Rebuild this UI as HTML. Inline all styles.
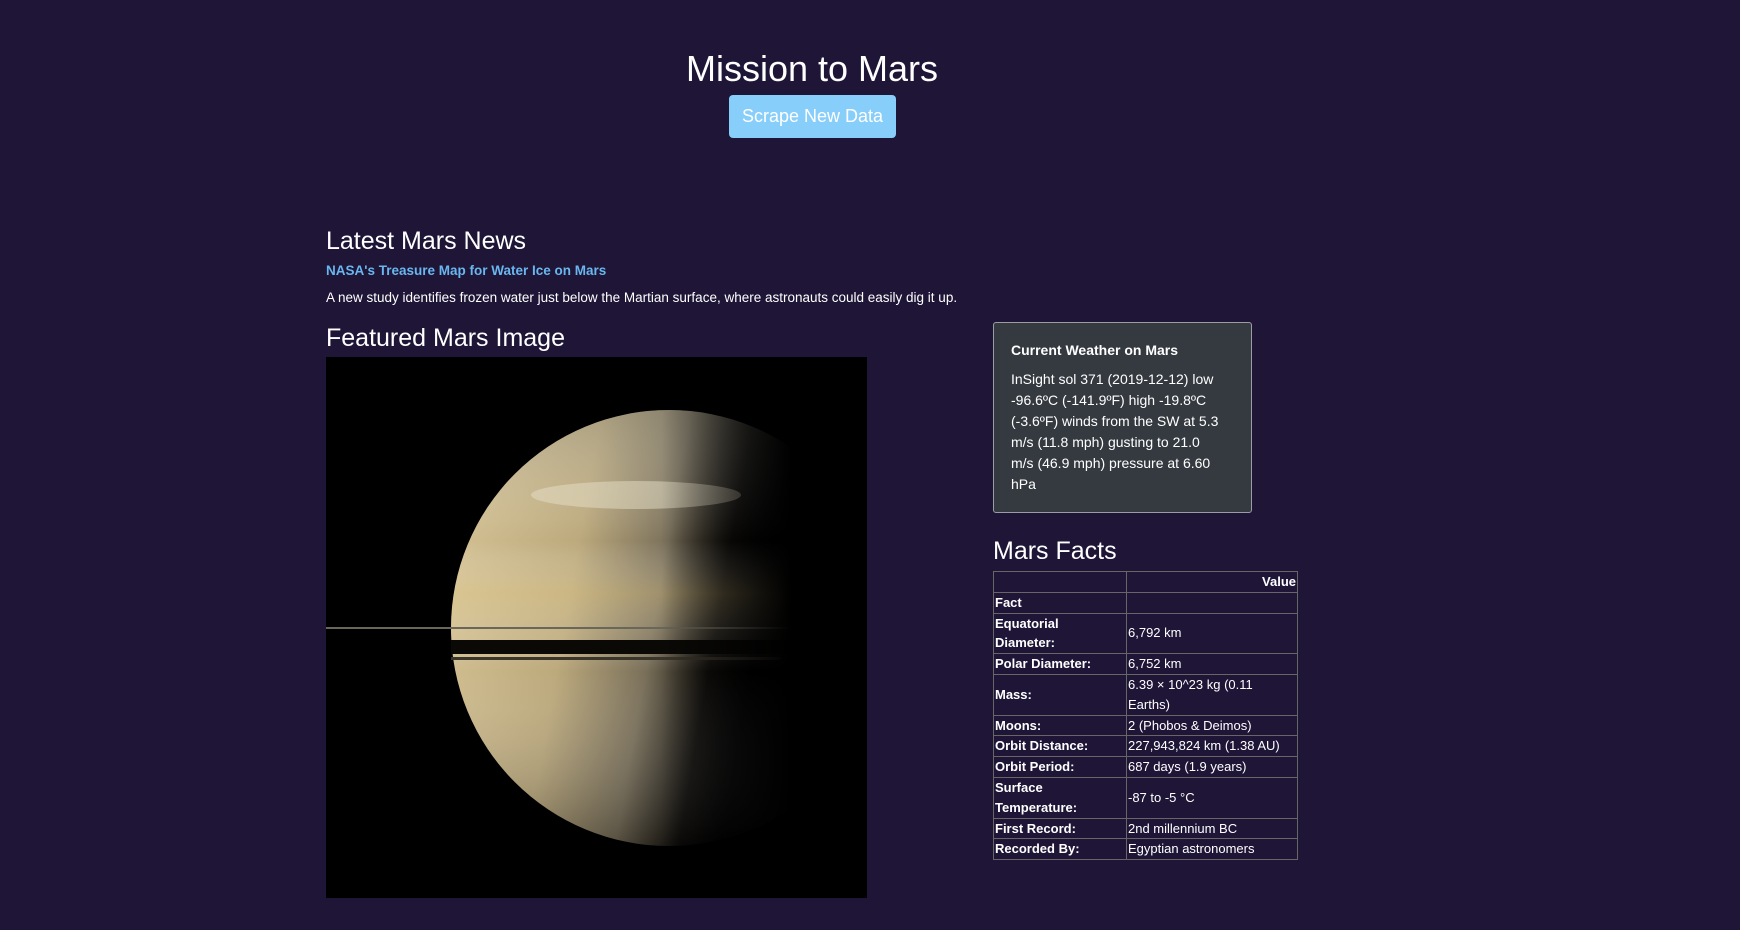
<!DOCTYPE html>
<html><head><meta charset="utf-8"><style>
*{box-sizing:border-box;margin:0;padding:0}
html,body{width:1740px;height:933px;overflow:hidden;background:#fff}
.bg{position:absolute;left:0;top:0;width:1740px;height:930px;background:#1e1537;color:#fff;font-family:"Liberation Sans",sans-serif}
.abs{position:absolute}
h1{position:absolute;left:0;width:1624px;text-align:center;top:48px;font-size:36px;font-weight:500}
.btn{left:729px;top:95px;width:167px;height:43px;background:#87cefa;border-radius:4px;font-size:18px;text-align:center;line-height:43px;color:#fff}
h2{position:absolute;font-size:25px;font-weight:500}
.link{color:#6ab6ef;font-weight:bold;font-size:13.5px}
.p{font-size:13.5px}
.card{left:993px;top:322px;width:259px;height:191px;background:#343a40;border:1px solid #9a9ea4;border-radius:3px;padding:17px 10px 17px 17px;font-size:14px;line-height:21px;white-space:nowrap}
table{position:absolute;left:993px;top:571px;width:305px;border-collapse:collapse;font-size:13px;line-height:19.8px;table-layout:fixed}
td,th{border:1px solid #666;padding:0 1px;vertical-align:middle;text-align:left}
th{font-weight:bold}
col.a{width:133px}
td:first-child{font-weight:bold}
</style></head><body><div class="bg">
<h1>Mission to Mars</h1>
<div class="abs btn">Scrape New Data</div>
<h2 style="left:326px;top:227px">Latest Mars News</h2>
<div class="abs link" style="left:326px;top:263px">NASA's Treasure Map for Water Ice on Mars</div>
<div class="abs p" style="left:326px;top:290px">A new study identifies frozen water just below the Martian surface, where astronauts could easily dig it up.</div>
<h2 style="left:326px;top:324px">Featured Mars Image</h2>
<svg class="abs" style="left:326px;top:357px" width="541" height="541" viewBox="0 0 541 541">
<defs>
<linearGradient id="pl" x1="125" y1="0" x2="470" y2="60" gradientUnits="userSpaceOnUse">
<stop offset="0" stop-color="#d8c698"/><stop offset="0.45" stop-color="#bca97c"/><stop offset="0.7" stop-color="#7a705a"/><stop offset="0.88" stop-color="#100e0b"/><stop offset="1" stop-color="#000"/></linearGradient>
<linearGradient id="bands" x1="0" y1="0" x2="0" y2="1">
<stop offset="0" stop-color="#8a8a80" stop-opacity=".4"/><stop offset=".3" stop-color="#fff" stop-opacity="0"/><stop offset=".42" stop-color="#e8d090" stop-opacity=".35"/><stop offset=".6" stop-color="#fff" stop-opacity="0"/><stop offset="1" stop-color="#000" stop-opacity=".3"/></linearGradient>
<linearGradient id="fade" x1="0" y1="0" x2="1" y2="0"><stop offset="0" stop-color="#000" stop-opacity="0"/><stop offset=".62" stop-color="#000" stop-opacity="0"/><stop offset=".86" stop-color="#000" stop-opacity="1"/></linearGradient>
</defs>
<rect width="541" height="541" fill="#000"/>
<circle cx="343" cy="271" r="218" fill="url(#pl)"/>
<circle cx="343" cy="271" r="218" fill="url(#bands)"/>
<ellipse cx="310" cy="138" rx="105" ry="14" fill="#e6e0c8" opacity=".5"/>
<rect x="0" y="270" width="541" height="2" fill="#6a675a"/>
<rect x="125" y="283" width="340" height="14" fill="#0a0906"/>
<rect x="125" y="300" width="330" height="3" fill="#3a352a"/>
<rect x="0" y="0" width="541" height="541" fill="url(#fade)"/>
</svg>
<div class="abs card"><div style="font-weight:bold;margin-bottom:8px">Current Weather on Mars</div>InSight sol 371 (2019-12-12) low<br>-96.6ºC (-141.9ºF) high -19.8ºC<br>(-3.6ºF) winds from the SW at 5.3<br>m/s (11.8 mph) gusting to 21.0<br>m/s (46.9 mph) pressure at 6.60<br>hPa</div>
<h2 style="left:993px;top:537px">Mars Facts</h2>
<table>
<colgroup><col class="a"><col></colgroup>
<tr><th></th><th style="text-align:right">Value</th></tr>
<tr><td>Fact</td><td></td></tr>
<tr><td>Equatorial<br>Diameter:</td><td>6,792 km</td></tr>
<tr><td>Polar Diameter:</td><td>6,752 km</td></tr>
<tr><td>Mass:</td><td>6.39 × 10^23 kg (0.11 Earths)</td></tr>
<tr><td>Moons:</td><td>2 (Phobos &amp; Deimos)</td></tr>
<tr><td>Orbit Distance:</td><td>227,943,824 km (1.38 AU)</td></tr>
<tr><td>Orbit Period:</td><td>687 days (1.9 years)</td></tr>
<tr><td>Surface<br>Temperature:</td><td>-87 to -5 °C</td></tr>
<tr><td>First Record:</td><td>2nd millennium BC</td></tr>
<tr><td>Recorded By:</td><td>Egyptian astronomers</td></tr>
</table>
</div></body></html>
